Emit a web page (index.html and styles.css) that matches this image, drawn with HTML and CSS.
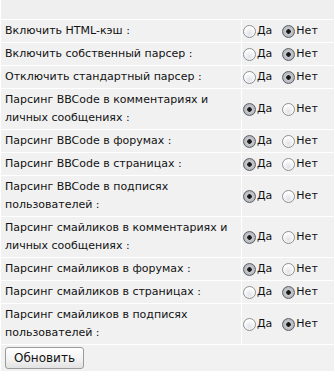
FILE: index.html
```html
<!DOCTYPE html>
<html lang="ru">
<head>
    <meta charset="UTF-8">
    <title>Настройки парсера</title>
    <link rel="stylesheet" href="styles.css">
</head>
<body>

<form class="settings">
<table class="options">
    <tr class="head"><td colspan="2"></td></tr>
    <tr>
        <td class="label">Включить HTML-кэш :</td>
        <td class="choice"><div class="pick"><label><input type="radio" name="html_cache" value="1">Да</label><label><input type="radio" name="html_cache" value="0" checked>Нет</label></div></td>
    </tr>
    <tr>
        <td class="label">Включить собственный парсер :</td>
        <td class="choice"><div class="pick"><label><input type="radio" name="own_parser" value="1">Да</label><label><input type="radio" name="own_parser" value="0" checked>Нет</label></div></td>
    </tr>
    <tr>
        <td class="label">Отключить стандартный парсер :</td>
        <td class="choice"><div class="pick"><label><input type="radio" name="no_std_parser" value="1">Да</label><label><input type="radio" name="no_std_parser" value="0" checked>Нет</label></div></td>
    </tr>
    <tr>
        <td class="label">Парсинг BBCode в комментариях и личных сообщениях :</td>
        <td class="choice"><div class="pick"><label><input type="radio" name="bb_comments" value="1" checked>Да</label><label><input type="radio" name="bb_comments" value="0">Нет</label></div></td>
    </tr>
    <tr>
        <td class="label">Парсинг BBCode в форумах :</td>
        <td class="choice"><div class="pick"><label><input type="radio" name="bb_forums" value="1" checked>Да</label><label><input type="radio" name="bb_forums" value="0">Нет</label></div></td>
    </tr>
    <tr>
        <td class="label">Парсинг BBCode в страницах :</td>
        <td class="choice"><div class="pick"><label><input type="radio" name="bb_pages" value="1" checked>Да</label><label><input type="radio" name="bb_pages" value="0">Нет</label></div></td>
    </tr>
    <tr>
        <td class="label">Парсинг BBCode в подписях пользователей :</td>
        <td class="choice"><div class="pick"><label><input type="radio" name="bb_sigs" value="1" checked>Да</label><label><input type="radio" name="bb_sigs" value="0">Нет</label></div></td>
    </tr>
    <tr>
        <td class="label">Парсинг смайликов в комментариях и личных сообщениях :</td>
        <td class="choice"><div class="pick"><label><input type="radio" name="sm_comments" value="1" checked>Да</label><label><input type="radio" name="sm_comments" value="0">Нет</label></div></td>
    </tr>
    <tr>
        <td class="label">Парсинг смайликов в форумах :</td>
        <td class="choice"><div class="pick"><label><input type="radio" name="sm_forums" value="1" checked>Да</label><label><input type="radio" name="sm_forums" value="0">Нет</label></div></td>
    </tr>
    <tr>
        <td class="label">Парсинг смайликов в страницах :</td>
        <td class="choice"><div class="pick"><label><input type="radio" name="sm_pages" value="1">Да</label><label><input type="radio" name="sm_pages" value="0" checked>Нет</label></div></td>
    </tr>
    <tr>
        <td class="label">Парсинг смайликов в подписях пользователей :</td>
        <td class="choice"><div class="pick"><label><input type="radio" name="sm_sigs" value="1">Да</label><label><input type="radio" name="sm_sigs" value="0" checked>Нет</label></div></td>
    </tr>
    <tr class="foot">
        <td colspan="2"><button type="submit" class="submit">Обновить</button></td>
    </tr>
</table>
</form>

</body>
</html>
```

FILE: styles.css
```css
body {
    margin: 0;
    background: #fff;
    font-family: "DejaVu Sans", Verdana, sans-serif;
    font-size: 11px;
    color: #111;
}

.options {
    width: 100%;
    border-collapse: separate;
    border-spacing: 1px;
    margin-top: -1px;
    background: #fff;
}

.options td {
    background: #f1f1f1;
    padding: 2px 4px;
    line-height: 18px;
    vertical-align: middle;
}

.head td {
    height: 15px;
    background: #efefef;
}

.label {
    width: 232px;
}

.options .choice {
    padding: 2px 1px;
    white-space: nowrap;
}

.pick {
    display: flex;
    align-items: center;
    height: 18px;
}

.pick label {
    display: flex;
    align-items: center;
    margin-right: 10px;
}

.pick input {
    -webkit-appearance: none;
    appearance: none;
    width: 13px;
    height: 13px;
    margin: 0 1px 0 0;
    border: 1px solid #8e8f8f;
    border-radius: 50%;
    background: radial-gradient(circle at 50% 70%, #dfe3ea 0, #f4f5f7 45%, #fff 70%);
    box-sizing: border-box;
}

.pick input:checked {
    border-color: #5d6167;
    background: radial-gradient(circle, #111 0, #222 2px, #c9ccd1 2.6px, #9da1a8 100%);
}

.foot td {
    padding: 2px 4px;
}

.submit {
    display: block;
    font-family: "DejaVu Sans", Verdana, sans-serif;
    font-size: 12px;
    color: #111;
    height: 22px;
    padding: 0 8px;
    border: 1px solid #9a9a9a;
    border-radius: 3px;
    background: linear-gradient(#ffffff, #f3f3f3 55%, #e2e2e2);
}
```
